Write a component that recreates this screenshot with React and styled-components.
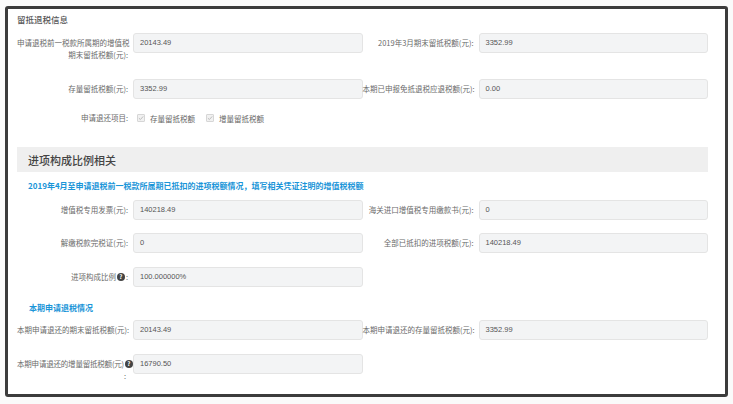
import React from "react";
import styled, { createGlobalStyle } from "styled-components";

const GlobalStyle = createGlobalStyle`
  html, body { margin: 0; padding: 0; background: #fafafa; }
  body { font-family: "Noto Sans CJK SC", "Liberation Sans", sans-serif; }
`;

const Page = styled.div`
  padding: 6px 5px;
`;

const Frame = styled.div`
  width: 723px;
  height: 391px;
  box-sizing: border-box;
  border: 3px solid #3b3b3b;
  border-radius: 3px;
  background: #fff;
  padding: 0 17px 0 9px;
  display: flex;
  flex-direction: column;
  overflow: hidden;
`;

const Title = styled.div`
  margin-top: 4px;
  height: 12px;
  line-height: 12px;
  font-size: 8.5px;
  font-weight: 500;
  color: #555;
`;

const Row = styled.div`
  display: grid;
  grid-template-columns: 1fr 1fr;
  margin-top: ${(p) => p.mt}px;
`;

const Field = styled.div`
  display: grid;
  grid-template-columns: 116px 1fr;
  align-items: start;
`;

const Label = styled.div`
  text-align: right;
  padding: ${(p) => (p.flat ? "0 5px 0 0" : p.tight ? "4px 0 0 0" : "4px 5px 0 0")};
  letter-spacing: ${(p) => (p.tight ? "-0.2px" : "0")};
  font-size: 7.5px;
  line-height: 12px;
  color: #6a6a6a;
  white-space: nowrap;
`;

const Input = styled.div`
  height: 20px;
  box-sizing: border-box;
  border: 1px solid #e4e4e4;
  border-radius: 3px;
  background: #f3f4f5;
  padding-left: 6px;
  font-size: 7.5px;
  line-height: 18px;
  color: #555;
  font-family: "Liberation Sans", "Noto Sans CJK SC", sans-serif;
`;

const CheckRow = styled.div`
  display: grid;
  grid-template-columns: 116px 1fr;
  margin-top: 13px;
  height: 12px;
  align-items: center;
`;

const CheckGroup = styled.div`
  display: flex;
  align-items: center;
  padding-left: 4px;
  gap: 5px;
  font-size: 7.5px;
  color: #666;
`;

const Box = styled.span`
  width: 8px;
  height: 8px;
  box-sizing: border-box;
  border: 1px solid #d6d6d6;
  border-radius: 1px;
  background: #f1f1f1;
  display: inline-flex;
  align-items: center;
  justify-content: center;
  margin-left: ${(p) => (p.first ? 0 : 6)}px;
`;

const Band = styled.div`
  margin-top: 23px;
  height: 25px;
  background: #efefef;
  padding-left: 11px;
  display: flex;
  align-items: center;
  font-size: 11px;
  font-weight: 500;
  color: #444;
`;

const Blue = styled.div`
  margin-top: ${(p) => p.mt}px;
  padding-left: ${(p) => p.pl}px;
  height: 12px;
  line-height: 12px;
  font-size: 8px;
  font-weight: 700;
  color: #1a95d8;
  white-space: nowrap;
`;

const Help = styled.span`
  display: inline-block;
  width: 8px;
  height: 8px;
  border-radius: 50%;
  background: #444;
  color: #fff;
  font-size: 6px;
  font-weight: 700;
  text-align: center;
  line-height: 8px;
  letter-spacing: 0;
  vertical-align: middle;
  position: relative;
  top: -1px;
  margin: 0 1px;
`;

const Check = () => (
  <svg width="6" height="6" viewBox="0 0 10 10">
    <path d="M1.5 5.2 L4 7.6 L8.6 2.4" fill="none" stroke="#bbb" strokeWidth="1.6" />
  </svg>
);

const F = ({ label, value, tight }) => (
  <Field>
    <Label tight={tight}>{label}</Label>
    <Input>{value}</Input>
  </Field>
);

export default function App() {
  return (
    <Page>
      <GlobalStyle />
      <Frame>
        <Title>留抵退税信息</Title>
        <Row mt={8}>
          <F
            label={
              <>
                申请退税前一税款所属期的增值税
                <br />
                期末留抵税额(元):
              </>
            }
            value="20143.49"
          />
          <F label="2019年3月期末留抵税额(元):" value="3352.99" />
        </Row>
        <Row mt={18}>
          <F label="存量留抵税额(元):" value="3352.99" />
          <F label="本期已申报免抵退税应退税额(元):" value="0.00" />
        </Row>
        <CheckRow>
          <Label flat>申请退还项目:</Label>
          <CheckGroup>
            <Box first>
              <Check />
            </Box>
            存量留抵税额
            <Box>
              <Check />
            </Box>
            增量留抵税额
          </CheckGroup>
        </CheckRow>
        <Band>进项构成比例相关</Band>
        <Blue mt={8} pl={11}>
          2019年4月至申请退税前一税款所属期已抵扣的进项税额情况，填写相关凭证注明的增值税税额
        </Blue>
        <Row mt={8}>
          <F label="增值税专用发票(元):" value="140218.49" />
          <F label="海关进口增值税专用缴款书(元):" value="0" />
        </Row>
        <Row mt={13}>
          <F label="解缴税款完税证(元):" value="0" />
          <F label="全部已抵扣的进项税额(元):" value="140218.49" />
        </Row>
        <Row mt={14}>
          <F
            label={
              <>
                进项构成比例<Help>?</Help>:
              </>
            }
            value="100.000000%"
          />
        </Row>
        <Blue mt={15} pl={12}>
          本期申请退税情况
        </Blue>
        <Row mt={6}>
          <F label="本期申请退还的期末留抵税额(元):" value="20143.49" />
          <F label="本期申请退还的存量留抵税额(元):" value="3352.99" />
        </Row>
        <Row mt={14}>
          <F
            tight
            label={
              <>
                本期申请退还的增量留抵税额(元)<Help>?</Help>
                <br />
                <span style={{ paddingRight: 7 }}>:</span>
              </>
            }
            value="16790.50"
          />
        </Row>
      </Frame>
    </Page>
  );
}
